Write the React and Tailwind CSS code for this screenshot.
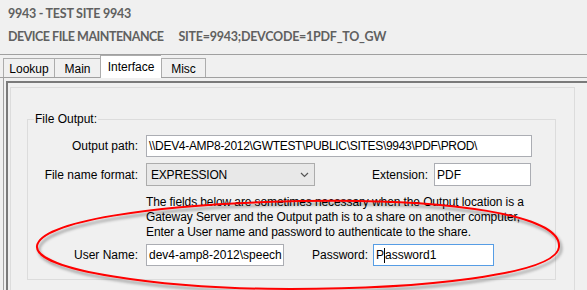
import React from "react";

const TABS = [
  { label: "Lookup", w: "w-[51px]" },
  { label: "Main", w: "w-[46px]" },
  { label: "Interface", w: "w-[61px]", active: true },
  { label: "Misc", w: "w-[45px]", last: true },
];

function Tab({ tab }) {
  if (tab.active) {
    return (
      <div
        className={`${tab.w} h-[23px] -mb-px bg-white border-l border-t border-[#acacac] flex items-start justify-center pt-[3px] leading-[16px]`}
      >
        {tab.label}
      </div>
    );
  }
  return (
    <div
      className={`${tab.w} h-[19px] border-l border-t border-[#acacac] ${tab.last ? "border-r" : ""} flex items-center justify-center leading-[16px] pt-[1px]`}
    >
      {tab.label}
    </div>
  );
}

function Ellipse() {
  // hand drawn red annotation around the credentials row
  return (
    <svg className="absolute inset-0 pointer-events-none" width="587" height="290" viewBox="0 0 587 290">
      <defs>
        <filter id="shade" x="-10%" y="-30%" width="120%" height="160%">
          <feDropShadow dx="2" dy="3" stdDeviation="1.5" floodColor="#000" floodOpacity="0.4" />
        </filter>
      </defs>
      <path
        d="M 37 246 C 40 222, 150 204, 300 201 C 450 198, 562 215, 559 247 C 556 275, 420 289, 290 289 C 160 289, 34 270, 37 246 Z"
        fill="none"
        stroke="#ff0000"
        strokeWidth="2"
        filter="url(#shade)"
      />
    </svg>
  );
}

export default function App() {
  return (
    <div className="relative w-[587px] h-[290px] overflow-hidden bg-[#f0f0f0] text-[12px] text-black font-['Liberation_Sans',Arial,sans-serif]">
      {/* Title */}
      <div className="h-[55px] border-b border-[#a0a0a0] px-[8px] pt-[4px] font-bold text-[#606060] font-['Lato','Liberation_Sans',sans-serif] text-[12.5px] tracking-[-0.25px]">
        <div className="leading-[20px]">9943 - TEST SITE 9943</div>
        <div className="mt-[3px] leading-[20px] whitespace-nowrap flex">
          <span className="tracking-[-0.5px]">DEVICE FILE MAINTENANCE</span>
          <span className="ml-[15px]">SITE=9943;DEVCODE=1PDF_TO_GW</span>
        </div>
      </div>

      {/* Tabs */}
      <div className="h-[23px] flex items-end pl-[3px] border-b border-[#a0a0a0]">
        {TABS.map((t) => (
          <Tab key={t.label} tab={t} />
        ))}
      </div>

      {/* Tab page */}
      <div className="ml-[3px] h-[220px] border-l border-[#a0a0a0] pl-[2px] pt-[3px]">
        <div className="h-full border-l-2 border-t-2 border-[#7a7a7a] pl-[2px] pt-[4px]">
          <div className="w-[565px] h-full border border-[#dcdcdc] pl-[16px] pr-[18px] pt-[31px]">
            {/* Group box */}
            <div className="relative h-[161px] border border-[#dcdcdc] pt-[15px]">
              <div className="absolute -top-[10px] left-[6px] px-[1px] bg-[#f0f0f0] leading-[18px]">
                File Output:
              </div>

              <div className="flex items-center h-[22px]">
                <div className="w-[110px] text-right">Output path:</div>
                <div className="ml-[8px] w-[386px] h-[22px] bg-white border border-[#abadb3] pl-[2px] flex items-center whitespace-nowrap tracking-[-0.3px]">
                  \\DEV4-AMP8-2012\GWTEST\PUBLIC\SITES\9943\PDF\PROD\
                </div>
              </div>

              <div className="flex items-center h-[23px] mt-[6px]">
                <div className="w-[110px] text-right">File name format:</div>
                <div className="ml-[8px] w-[169px] h-[23px] bg-[#e8e8e8] border border-[#acacac] pl-[4px] pr-[5px] flex items-center justify-between">
                  <span className="tracking-[-0.2px]">EXPRESSION</span>
                  <svg width="9" height="6" viewBox="0 0 9 6">
                    <path d="M1 1 L4.5 4.5 L8 1" fill="none" stroke="#555" strokeWidth="1.2" />
                  </svg>
                </div>
                <div className="w-[113px] text-right">Extension:</div>
                <div className="ml-[6px] w-[97px] h-[23px] bg-white border border-[#abadb3] pl-[2px] flex items-center">
                  PDF
                </div>
              </div>

              <p className="mt-[9px] pl-[118px] leading-[15px] whitespace-nowrap tracking-[-0.1px]">
                The fields below are sometimes necessary when the Output location is a
                <br />
                Gateway Server and the Output path is to a share on another computer,
                <br />
                Enter a User name and password to authenticate to the share.
              </p>

              <div className="flex items-center h-[23px] mt-[3px]">
                <div className="w-[110px] text-right">User Name:</div>
                <div className="ml-[8px] w-[138px] h-[22px] bg-white border border-[#abadb3] pl-[2px] flex items-center whitespace-nowrap">
                  dev4-amp8-2012\speech
                </div>
                <div className="w-[84px] text-right">Password:</div>
                <div className="ml-[5px] w-[121px] h-[22px] mt-[1px] bg-white border border-[#569de5] pl-[2px] flex items-center">
                  <span>P</span>
                  <span className="w-px h-[15px] bg-black" />
                  <span>assword1</span>
                </div>
              </div>
            </div>
          </div>
        </div>
      </div>

      <Ellipse />
    </div>
  );
}
